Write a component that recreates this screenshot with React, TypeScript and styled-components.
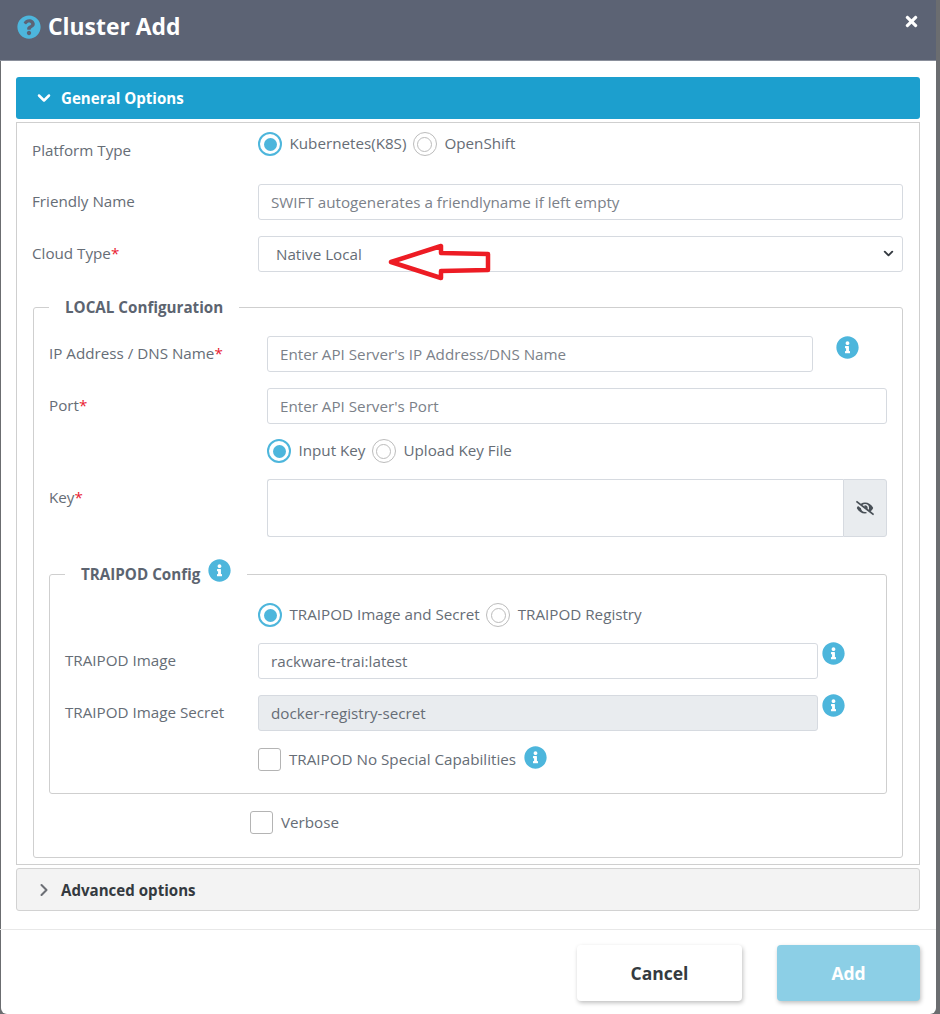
import React from 'react'
import styled, { createGlobalStyle } from 'styled-components'
import { FaEyeSlash, FaInfoCircle, FaQuestionCircle, FaTimes } from 'react-icons/fa'
import { ChevronDown, ChevronRight } from 'lucide-react'

const GlobalStyle = createGlobalStyle`
  html, body {
    margin: 0;
    padding: 0;
    background: #fff;
  }
  * {
    box-sizing: border-box;
  }
`

const Shell = styled.div`
  width: 940px;
  height: 1014px;
  overflow: hidden;
  background: #6b6d70;
  padding-left: 1px;
  font-family: 'Open Sans', 'Liberation Sans', sans-serif;
  font-size: 15.2px;
  color: #666d76;
`

const Modal = styled.div`
  position: relative;
  width: 935px;
  height: 1014px;
  background: #fff;
  border-radius: 0 0 6px 6px;
`

const Header = styled.header`
  height: 61px;
  margin-left: -1px;
  background: #5c6374;
  border-bottom: 1px solid #8a8f9b;
  display: flex;
  align-items: flex-start;
  justify-content: space-between;
  padding: 15px 16px 0 17px;
`

const TitleGroup = styled.div`
  display: flex;
  align-items: center;
  gap: 7px;
  color: #4db6dc;
  font-size: 24px;
  line-height: 24px;

  svg {
    display: block;
  }
`

const Title = styled.h1`
  margin: 0;
  font-size: 22.9px;
  line-height: 24px;
  font-weight: 700;
  color: #fff;
`

const CloseIcon = styled(FaTimes)`
  color: #fff;
  font-size: 17px;
  margin-top: -2px;
`

const Body = styled.main`
  padding: 16px 16px 0 15px;
`

const SectionBar = styled.div<{ $open?: boolean }>`
  height: ${(p) => (p.$open ? '42px' : '43px')};
  display: flex;
  align-items: center;
  gap: 7px;
  padding-left: ${(p) => (p.$open ? '18px' : '17px')};
  border-radius: 3px;
  font-size: 15.1px;
  font-weight: 700;
  background: ${(p) => (p.$open ? '#1c9fce' : '#f3f3f3')};
  color: ${(p) => (p.$open ? '#fff' : '#343a40')};
  border: ${(p) => (p.$open ? 'none' : '1px solid #d2d2d2')};
`

const Panel = styled.section`
  margin: 3px 0;
  height: 743px;
  border: 1px solid #cfcfcf;
  padding: 0 16px 0 15px;
`

const Row = styled.div<{ $col: number; $h?: number; $gap?: number }>`
  display: grid;
  grid-template-columns: ${(p) => p.$col}px 1fr;
  min-height: ${(p) => p.$h ?? 36}px;
  margin-bottom: ${(p) => p.$gap ?? 16}px;
`

const TopRow = styled(Row)`
  height: 45px;
`

const Label = styled.label`
  align-self: center;
  line-height: 20px;
  padding-bottom: 2px;
`

const TopLabel = styled(Label)<{ $top: number }>`
  align-self: start;
  padding-top: ${(p) => p.$top}px;
`

const Star = styled.span`
  color: #e9202f;
`

const Controls = styled.div`
  display: flex;
  align-items: flex-start;
`

const Input = styled.input`
  flex: 1;
  min-width: 0;
  width: 100%;
  height: 36px;
  padding: 0 12px;
  border: 1px solid #d6dae0;
  border-radius: 3px;
  background: #fff;
  font: inherit;
  color: #666d76;
  outline: none;

  &::placeholder {
    color: #7b8189;
    opacity: 1;
  }

  &:disabled {
    background: #e9ecef;
  }
`

const SelectWrap = styled.div`
  position: relative;
  color: #343a40;

  svg {
    position: absolute;
    right: 7px;
    top: 10px;
    pointer-events: none;
  }
`

const Select = styled.select`
  display: block;
  width: 100%;
  height: 36px;
  padding: 0 30px 0 17px;
  border: 1px solid #d6dae0;
  border-radius: 3px;
  background: #fff;
  font: inherit;
  color: #666d76;
  outline: none;
  appearance: none;
`

const KeyInput = styled(Input)`
  height: 58px;
  border-radius: 3px 0 0 3px;
  border-right: none;
`

const EyeAddon = styled.span`
  width: 44px;
  height: 58px;
  flex: none;
  display: flex;
  align-items: center;
  justify-content: center;
  background: #e9ecef;
  border: 1px solid #d6dae0;
  border-radius: 0 3px 3px 0;
  color: #495057;
  font-size: 18px;
`

const RadioRow = styled.div<{ $top?: number }>`
  display: flex;
  align-items: center;
  height: 24px;
  margin-top: ${(p) => p.$top ?? 0}px;
`

const RadioLabel = styled.span`
  margin: -3px 6.5px 0 7.5px;
  line-height: 20px;
`

const RadioMark = styled.span<{ $on?: boolean }>`
  width: 24px;
  height: 24px;
  flex: none;
  border-radius: 50%;
  display: flex;
  align-items: center;
  justify-content: center;
  border: ${(p) => (p.$on ? '2.5px solid #4db6dc' : '1.5px solid #bcbcbc')};

  &::after {
    content: '';
    width: 13px;
    height: 13px;
    border-radius: 50%;
    background: ${(p) => (p.$on ? '#4db6dc' : '#fff')};
    border: ${(p) => (p.$on ? 'none' : '1.5px solid #bcbcbc')};
  }
`

const CheckRow = styled.div<{ $indent?: number }>`
  display: flex;
  align-items: center;
  height: 24px;
  gap: 8px;
  padding-left: ${(p) => p.$indent ?? 0}px;
`

const CheckBox = styled.span`
  width: 23px;
  height: 23px;
  flex: none;
  border: 1.5px solid #b4b4b4;
  border-radius: 3px;
  background: #fff;
`

const InfoIcon = styled(FaInfoCircle)<{ $left?: number; $right?: number; $lift?: number }>`
  flex: none;
  color: #4db6dc;
  font-size: 23px;
  margin-top: ${(p) => -(p.$lift ?? 0)}px;
  margin-left: ${(p) => p.$left ?? 0}px;
  margin-right: ${(p) => p.$right ?? 0}px;
`

const Group = styled.fieldset<{ $nested?: boolean }>`
  margin: ${(p) => (p.$nested ? '27px 0 16px' : '25px 0 0 1px')};
  min-width: 0;
  border: 1px solid #cfcfcf;
  border-radius: 3px;
  padding: ${(p) => (p.$nested ? '19px 15px 22px' : '19px 15px 23px')};
`

const Legend = styled.legend`
  padding: 0 16px;
  height: 20px;
  display: flex;
  align-items: center;
  font-weight: 700;
  line-height: 20px;
  color: #5c6470;
`

const LegendInfo = styled(InfoIcon)`
  margin: -7px 0 0 8px;
`

const Footer = styled.footer`
  position: absolute;
  left: -1px;
  right: 0;
  bottom: 0;
  height: 85px;
  border-top: 1px solid #e8e8e8;
  display: flex;
  justify-content: flex-end;
  gap: 35px;
  padding: 15px 16px 0 0;
`

const FooterButton = styled.button<{ $primary?: boolean; $w: number }>`
  width: ${(p) => p.$w}px;
  height: 56px;
  border: none;
  border-radius: 4px;
  font-family: inherit;
  font-size: 17.5px;
  font-weight: 700;
  background: ${(p) => (p.$primary ? '#8ccfe6' : '#fff')};
  color: ${(p) => (p.$primary ? '#fff' : '#343a40')};
  box-shadow: 1px 2px 4px rgba(0, 0, 0, 0.25);
`

const ArrowMark = styled.svg`
  position: absolute;
  left: 386px;
  top: 241px;
`

function Required() {
  return <Star>*</Star>
}

export default function App() {
  return (
    <Shell>
      <GlobalStyle />
      <Modal>
        <Header>
          <TitleGroup>
            <FaQuestionCircle />
            <Title>Cluster Add</Title>
          </TitleGroup>
          <CloseIcon />
        </Header>

        <Body>
          <SectionBar $open>
            <ChevronDown size={20} strokeWidth={3} />
            General Options
          </SectionBar>

          <Panel>
            <TopRow $col={226}>
              <TopLabel $top={17}>Platform Type</TopLabel>
              <RadioRow $top={9}>
                <RadioMark $on />
                <RadioLabel>Kubernetes(K8S)</RadioLabel>
                <RadioMark />
                <RadioLabel>OpenShift</RadioLabel>
              </RadioRow>
            </TopRow>

            <Row $col={226}>
              <Label>Friendly Name</Label>
              <Input placeholder="SWIFT autogenerates a friendlyname if left empty" />
            </Row>

            <Row $col={226} $gap={0}>
              <Label>
                Cloud Type<Required />
              </Label>
              <SelectWrap>
                <Select defaultValue="local">
                  <option value="local">Native Local</option>
                </Select>
                <ChevronDown size={15} strokeWidth={3} />
              </SelectWrap>
            </Row>

            <Group>
              <Legend>LOCAL Configuration</Legend>

              <Row $col={218}>
                <Label>
                  IP Address / DNS Name<Required />
                </Label>
                <Controls>
                  <Input placeholder="Enter API Server's IP Address/DNS Name" />
                  <InfoIcon $left={23} $right={28} />
                </Controls>
              </Row>

              <Row $col={218} $gap={15}>
                <Label>
                  Port<Required />
                </Label>
                <Input placeholder="Enter API Server's Port" />
              </Row>

              <Row $col={218} $h={24}>
                <span />
                <RadioRow>
                  <RadioMark $on />
                  <RadioLabel>Input Key</RadioLabel>
                  <RadioMark />
                  <RadioLabel>Upload Key File</RadioLabel>
                </RadioRow>
              </Row>

              <Row $col={218} $h={58} $gap={0}>
                <TopLabel $top={8}>
                  Key<Required />
                </TopLabel>
                <Controls>
                  <KeyInput />
                  <EyeAddon>
                    <FaEyeSlash />
                  </EyeAddon>
                </Controls>
              </Row>

              <Group $nested>
                <Legend>
                  TRAIPOD Config
                  <LegendInfo />
                </Legend>

                <Row $col={193} $h={24}>
                  <span />
                  <RadioRow>
                    <RadioMark $on />
                    <RadioLabel>TRAIPOD Image and Secret</RadioLabel>
                    <RadioMark />
                    <RadioLabel>TRAIPOD Registry</RadioLabel>
                  </RadioRow>
                </Row>

                <Row $col={193}>
                  <Label>TRAIPOD Image</Label>
                  <Controls>
                    <Input defaultValue="rackware-trai:latest" />
                    <InfoIcon $left={4} $right={26} $lift={1} />
                  </Controls>
                </Row>

                <Row $col={193}>
                  <Label>TRAIPOD Image Secret</Label>
                  <Controls>
                    <Input disabled defaultValue="docker-registry-secret" />
                    <InfoIcon $left={4} $right={26} $lift={1} />
                  </Controls>
                </Row>

                <CheckRow $indent={193}>
                  <CheckBox />
                  <span>TRAIPOD No Special Capabilities</span>
                  <InfoIcon $lift={4} />
                </CheckRow>
              </Group>

              <CheckRow $indent={201}>
                <CheckBox />
                <span>Verbose</span>
              </CheckRow>
            </Group>
          </Panel>

          <SectionBar>
            <ChevronRight size={20} strokeWidth={2.5} color="#6c6f75" />
            Advanced options
          </SectionBar>
        </Body>

        <ArrowMark width="106" height="42" viewBox="0 0 106 42">
          <path
            d="M4 21 L54 5 L54 12 L101 13 L101 29 L54 30 L54 37 Z"
            fill="#fff"
            stroke="#ed1c24"
            strokeWidth="4.5"
            strokeLinejoin="round"
          />
        </ArrowMark>

        <Footer>
          <FooterButton $w={165}>Cancel</FooterButton>
          <FooterButton $primary $w={143}>
            Add
          </FooterButton>
        </Footer>
      </Modal>
    </Shell>
  )
}
